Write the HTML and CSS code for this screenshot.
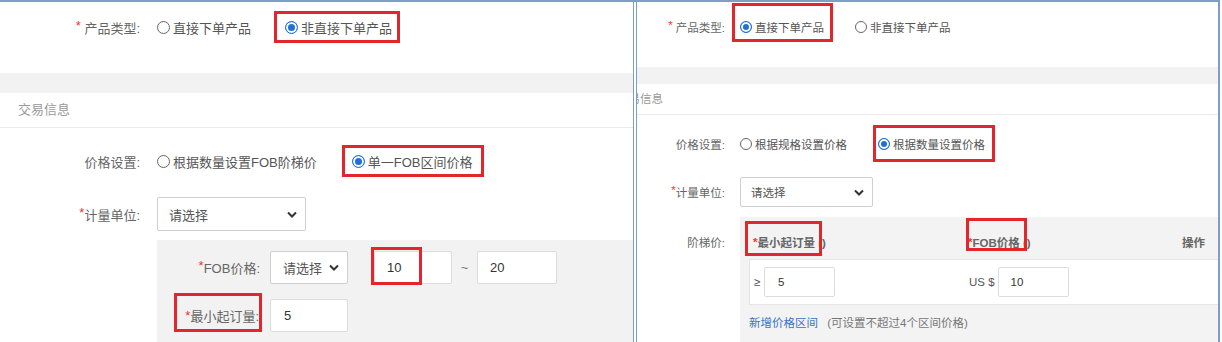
FILE: index.html
```html
<!DOCTYPE html>
<html lang="zh-CN">
<head>
    <meta charset="UTF-8">
    <title>产品类型与价格设置</title>
    <link rel="stylesheet" href="styles.css">
</head>
<body>
    <div class="shot">
        <!-- 左图：非直接下单产品 -->
        <section class="panel left">
            <div class="row row-type">
                <div class="lbl"><span class="req">*</span>&nbsp;产品类型:</div>
                <span class="radio"><span class="dot"></span>直接下单产品</span>
                <span class="mark mark-type"><span class="radio on"><span class="dot"></span>非直接下单产品</span></span>
            </div>
            <div class="band"></div>
            <div class="sec-title">交易信息</div>
            <div class="row row-price">
                <div class="lbl">价格设置:</div>
                <span class="radio"><span class="dot"></span>根据数量设置FOB阶梯价</span>
                <span class="mark mark-price"><span class="radio on"><span class="dot"></span>单一FOB区间价格</span></span>
            </div>
            <div class="row row-unit">
                <div class="lbl"><span class="req">*</span>计量单位:</div>
                <div class="select sel-unit">请选择
                    <svg width="10" height="7" viewBox="0 0 10 7"><polyline points="1,1.5 5,5.5 9,1.5" fill="none" stroke="#333" stroke-width="2"/></svg>
                </div>
            </div>
            <div class="fob-box">
                <div class="fob-row">
                    <div class="sub-lbl"><span class="req">*</span>FOB价格:</div>
                    <div class="select sel-fob">请选择
                        <svg width="10" height="7" viewBox="0 0 10 7"><polyline points="1,1.5 5,5.5 9,1.5" fill="none" stroke="#333" stroke-width="2"/></svg>
                    </div>
                    <div class="inp inp-from">10<span class="mark-over"></span></div>
                    <span class="tilde">~</span>
                    <div class="inp inp-to">20</div>
                </div>
                <div class="fob-row moq-row">
                    <div class="sub-lbl"><span class="mark mark-moq"><span class="req">*</span>最小起订量:</span></div>
                    <div class="inp inp-moq">5</div>
                </div>
            </div>
        </section>

        <div class="divider"></div>

        <!-- 右图：直接下单产品 -->
        <section class="panel right">
            <div class="row row-type">
                <div class="lbl"><span class="req">*</span>&nbsp;产品类型:</div>
                <span class="mark mark-type"><span class="radio on"><span class="dot"></span>直接下单产品</span></span>
                <span class="radio second"><span class="dot"></span>非直接下单产品</span>
            </div>
            <div class="band"></div>
            <div class="sec-title"><span>交易信息</span></div>
            <div class="row row-price">
                <div class="lbl">价格设置:</div>
                <span class="radio"><span class="dot"></span>根据规格设置价格</span>
                <span class="mark mark-price"><span class="radio on"><span class="dot"></span>根据数量设置价格</span></span>
            </div>
            <div class="row row-unit">
                <div class="lbl"><span class="req">*</span>计量单位:</div>
                <div class="select sel-unit">请选择
                    <svg width="10" height="7" viewBox="0 0 10 7"><polyline points="1,1.5 5,5.5 9,1.5" fill="none" stroke="#333" stroke-width="2"/></svg>
                </div>
            </div>
            <div class="tier-wrap">
                <div class="lbl tier-lbl">阶梯价:</div>
                <div class="tier">
                    <div class="tier-head">
                        <div class="cell c1"><span class="req">*</span>最小起订量 ()<span class="mark-over m1"></span></div>
                        <div class="cell c2"><span class="req">*</span>FOB价格 ()<span class="mark-over m2"></span></div>
                        <div class="cell c3">操作</div>
                    </div>
                    <div class="tier-body">
                        <div class="cell c1"><span class="ge">≥</span><div class="inp inp-min">5</div></div>
                        <div class="cell c2"><span class="cur">US $</span><div class="inp inp-fob">10</div></div>
                    </div>
                    <div class="tier-foot">
                        <span class="link">新增价格区间</span>
                        <span class="hint">(可设置不超过4个区间价格)</span>
                    </div>
                </div>
            </div>
        </section>
    </div>
</body>
</html>
```

FILE: styles.css
```css
body {
    margin: 0;
    width: 1222px;
    height: 342px;
    overflow: hidden;
    background: #fff;
    font-family: "Liberation Sans", "Noto Sans CJK SC", sans-serif;
    color: #555;
}

.shot {
    display: flex;
    width: 1220px;
    height: 340px;
    border-top: 2px solid #7f9ec6;
}

.panel {
    position: relative;
    overflow: hidden;
    height: 340px;
}

.left {
    width: 633px;
    font-size: 13px;
}

.right {
    width: 581px;
    font-size: 11.5px;
    border-right: 2px solid #7f9ec6;
}

.divider {
    width: 2px;
    border-left: 1px solid #7f9ec6;
    border-right: 1px solid #7f9ec6;
}

.req {
    color: #e33;
}

.row {
    display: flex;
    align-items: center;
    box-sizing: border-box;
}

.lbl {
    display: flex;
    justify-content: flex-end;
    box-sizing: border-box;
    color: #666;
    flex: none;
}

.radio {
    display: inline-flex;
    align-items: center;
    white-space: nowrap;
    color: #555;
}

.radio .dot {
    width: 13px;
    height: 13px;
    border: 1px solid #666;
    border-radius: 50%;
    box-sizing: border-box;
    margin-right: 3px;
    background: #fff;
}

.radio.on .dot {
    border-color: #1f6fdc;
    background: #1f6fdc;
    box-shadow: inset 0 0 0 2px #fff;
}

.mark {
    display: inline-flex;
    align-items: center;
    box-sizing: border-box;
    border: 3px solid #e3262c;
}

.mark-over {
    position: absolute;
    box-sizing: border-box;
    border: 3px solid #e3262c;
}

.band {
    background: #f2f2f2;
}

.sec-title {
    color: #999;
    border-bottom: 1px solid #ebebeb;
    box-sizing: border-box;
    white-space: nowrap;
}

.select {
    display: flex;
    align-items: center;
    justify-content: space-between;
    box-sizing: border-box;
    border: 1px solid #cfcfcf;
    border-radius: 2px;
    background: #fff;
    color: #555;
}

.inp {
    position: relative;
    display: flex;
    align-items: center;
    box-sizing: border-box;
    border: 1px solid #dcdcdc;
    border-radius: 2px;
    background: #fff;
    color: #333;
}

/* 左图 */
.left .lbl {
    width: 157px;
    padding-right: 17px;
}

.left .row-type {
    height: 32px;
    margin-top: 9px;
}

.left .mark-type {
    height: 32px;
    margin-left: 23px;
    padding: 0 5px 0 8px;
}

.left .band {
    height: 20px;
    margin-top: 30px;
}

.left .sec-title {
    height: 35px;
    line-height: 33px;
    padding-left: 18px;
}

.left .row-price {
    height: 32px;
    margin-top: 17px;
}

.left .mark-price {
    height: 32px;
    margin-left: 25px;
    padding: 0 9px 0 7px;
}

.left .row-unit {
    height: 34px;
    margin-top: 20px;
}

.left .sel-unit {
    width: 149px;
    height: 34px;
    padding: 0 8px 0 11px;
}

.fob-box {
    margin: 9px 0 0 157px;
    padding-top: 11px;
    height: 120px;
    background: #f2f2f2;
}

.fob-row {
    display: flex;
    align-items: center;
    height: 33px;
}

.sub-lbl {
    width: 113px;
    flex: none;
    display: flex;
    justify-content: flex-end;
    box-sizing: border-box;
    padding-right: 10px;
    color: #666;
}

.sel-fob {
    width: 78px;
    height: 33px;
    padding: 0 8px 0 12px;
}

.inp-from {
    width: 78px;
    height: 33px;
    margin-left: 26px;
    padding-left: 12px;
}

.inp-from .mark-over {
    left: -4px;
    top: -5px;
    width: 51px;
    height: 38px;
}

.tilde {
    width: 25px;
    text-align: center;
    color: #777;
}

.inp-to {
    width: 80px;
    height: 33px;
    padding-left: 12px;
}

.moq-row {
    height: 39px;
    margin-top: 9px;
    align-items: flex-end;
}

.moq-row .sub-lbl {
    padding-right: 8px;
}

.mark-moq {
    height: 39px;
    padding: 6px 0 0 8px;
    margin-right: 0;
}

.inp-moq {
    width: 78px;
    height: 33px;
    padding-left: 13px;
}

/* 右图 */
.right .lbl {
    width: 103px;
    padding-right: 15px;
}

.right .row-type {
    height: 39px;
    margin-top: 1px;
    padding-top: 8px;
}

.right .mark-type {
    height: 39px;
    margin: -8px 0 0 -8px;
    padding: 8px 6px 0 5px;
}

.right .radio .dot {
    width: 12px;
    height: 12px;
}

.right .radio.second {
    margin-left: 22px;
}

.right .band {
    height: 17px;
    margin-top: 25px;
}

.right .sec-title {
    height: 31px;
    line-height: 31px;
}

.right .sec-title span {
    margin-left: -20px;
}

.right .row-price {
    height: 37px;
    margin-top: 10px;
}

.right .mark-price {
    height: 37px;
    margin-left: 26px;
    padding: 0 7px 0 2px;
}

.right .row-unit {
    height: 30px;
    margin-top: 15px;
}

.right .sel-unit {
    width: 133px;
    height: 30px;
    padding: 0 8px 0 10px;
}

.tier-wrap {
    display: flex;
    margin-top: 10px;
}

.tier-lbl {
    padding-top: 17px;
}

.tier {
    flex: 1;
    padding-left: 9px;
    background: #f3f3f3;
}

.tier-head {
    display: flex;
    align-items: center;
    height: 42px;
    padding-top: 7px;
    box-sizing: border-box;
    color: #666;
    font-weight: bold;
}

.cell {
    position: relative;
    display: flex;
    align-items: center;
    box-sizing: border-box;
    white-space: nowrap;
}

.c1 {
    width: 219px;
    padding-left: 4px;
}

.c2 {
    width: 214px;
}

.mark-over.m1 {
    left: -4px;
    top: -13px;
    width: 77px;
    height: 35px;
}

.mark-over.m2 {
    left: -2px;
    top: -16px;
    width: 61px;
    height: 33px;
}

.tier-body {
    display: flex;
    align-items: center;
    height: 46px;
    background: #fff;
    border: 1px solid #e6e6e6;
    border-right: none;
    box-sizing: border-box;
}

.ge {
    width: 10px;
    color: #555;
}

.inp-min {
    width: 71px;
    height: 30px;
    padding-left: 13px;
}

.cur {
    color: #555;
    margin-right: 3px;
}

.inp-fob {
    width: 71px;
    height: 30px;
    padding-left: 12px;
}

.tier-foot {
    height: 37px;
    line-height: 36px;
    white-space: nowrap;
}

.link {
    color: #3a74c6;
}

.hint {
    margin-left: 6px;
    color: #777;
}
```
